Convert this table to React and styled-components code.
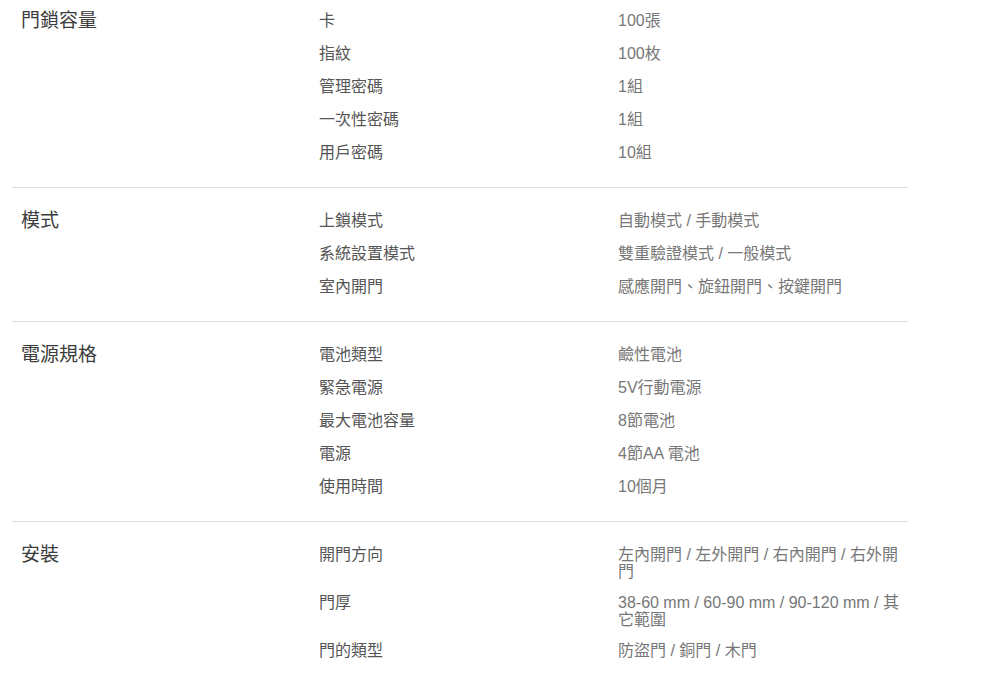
import React from 'react';
import styled, { createGlobalStyle } from 'styled-components';

const GlobalStyle = createGlobalStyle`
  html, body {
    margin: 0;
    padding: 0;
    background: #fff;
  }
  body {
    font-family: "Liberation Sans", "Noto Sans CJK TC", Arial, sans-serif;
  }
`;

const specs = [
  {
    title: '門鎖容量',
    rows: [
      ['卡', '100張'],
      ['指紋', '100枚'],
      ['管理密碼', '1組'],
      ['一次性密碼', '1組'],
      ['用戶密碼', '10組'],
    ],
  },
  {
    title: '模式',
    rows: [
      ['上鎖模式', '自動模式 / 手動模式'],
      ['系統設置模式', '雙重驗證模式 / 一般模式'],
      ['室內開門', '感應開門、旋鈕開門、按鍵開門'],
    ],
  },
  {
    title: '電源規格',
    rows: [
      ['電池類型', '鹼性電池'],
      ['緊急電源', '5V行動電源'],
      ['最大電池容量', '8節電池'],
      ['電源', '4節AA 電池'],
      ['使用時間', '10個月'],
    ],
  },
  {
    title: '安裝',
    rows: [
      ['開門方向', '左內開門 / 左外開門 / 右內開門 / 右外開門'],
      ['門厚', '38-60 mm / 60-90 mm / 90-120 mm / 其它範圍'],
      ['門的類型', '防盜門 / 銅門 / 木門'],
    ],
  },
];

const SpecTable = styled.div`
  width: 896px;
  margin-left: 12px;
`;

const Section = styled.section`
  display: grid;
  grid-template-columns: 307px 299px 290px;
  padding: ${({ $first }) => ($first ? '4px' : '16px')} 0 18px;
  border-top: ${({ $first }) => ($first ? 'none' : '1px solid #dedede')};
`;

const SectionTitle = styled.h3`
  margin: 0;
  padding: 7px 0 0 9px;
  font-size: 19px;
  line-height: 19px;
  font-weight: 400;
  color: #3c3c3c;
`;

const Rows = styled.div`
  grid-column: 2 / 4;
  display: flex;
  flex-direction: column;
`;

const Row = styled.div`
  display: grid;
  grid-template-columns: 299px 290px;
  padding: ${({ $wrap }) => ($wrap ? '8px 0 6px' : '8px 0')};
  font-size: 16px;
  line-height: 17px;
`;

const Key = styled.div`
  color: #555;
`;

const Value = styled.div`
  color: #777;
`;

export default function App() {
  return (
    <>
      <GlobalStyle />
      <SpecTable>
        {specs.map((section, i) => (
          <Section key={section.title} $first={i === 0}>
            <SectionTitle>{section.title}</SectionTitle>
            <Rows>
              {section.rows.map(([k, v]) => (
                <Row key={k} $wrap={v.length > 18}>
                  <Key>{k}</Key>
                  <Value>{v}</Value>
                </Row>
              ))}
            </Rows>
          </Section>
        ))}
      </SpecTable>
    </>
  );
}
